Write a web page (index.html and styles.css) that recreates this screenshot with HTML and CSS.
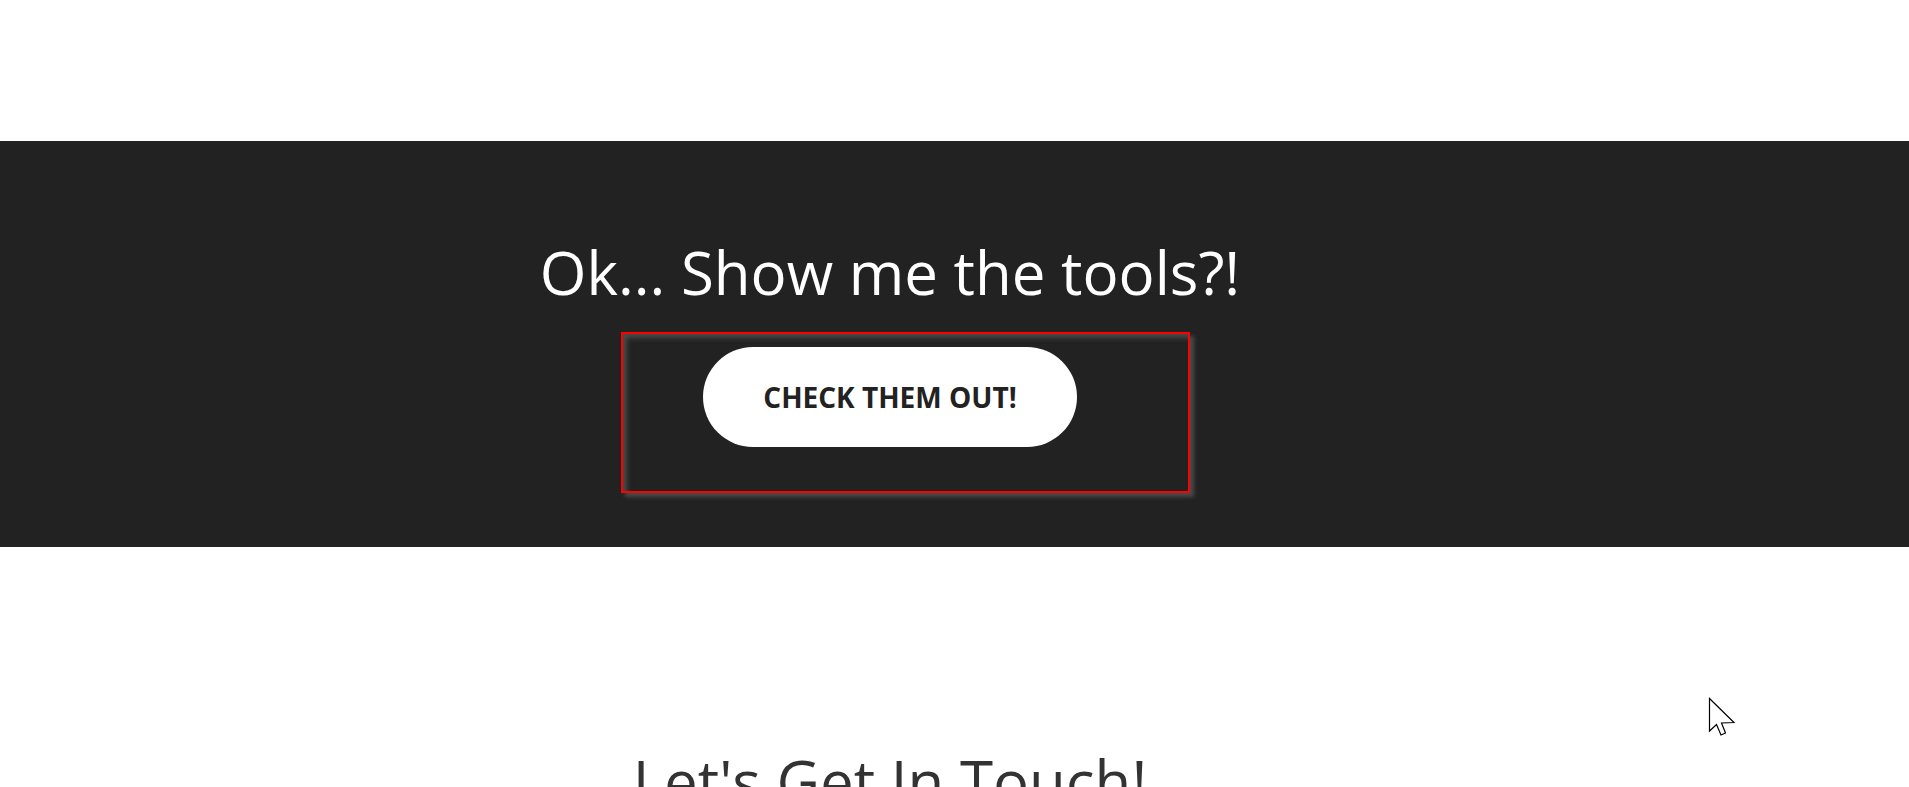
FILE: index.html
```html
<!DOCTYPE html>
<html lang="en">
<head>
<meta charset="utf-8">
<title>Tools</title>
<link rel="stylesheet" href="styles.css">
</head>
<body>
<div class="top-space"></div>
<section class="cta">
  <h2 class="cta-title">Ok... Show me the tools?!</h2>
  <div class="frame">
    <a class="btn" href="#">CHECK THEM OUT!</a>
  </div>
</section>
<section class="contact">
  <h2 class="contact-title">Let's Get In Touch!</h2>
</section>
<svg class="cursor" width="28" height="40" viewBox="0 0 28 40">
  <path d="M1.5 1.5 L1.5 34 L8.5 27.5 L13 38 L17.5 36 L13.5 26 L26 25.5 Z" fill="#fff" stroke="#000" stroke-width="1.2" stroke-linejoin="miter"/>
</svg>
</body>
</html>
```
FILE: styles.css
```css
html, body {
  margin: 0;
  padding: 0;
  background: #ffffff;
  font-family: "Open Sans", "Noto Sans", sans-serif;
  overflow: hidden;
}

.top-space {
  height: 141px;
}

.cta {
  background: #222222;
  height: 406px;
  box-sizing: border-box;
  padding: 95px 129px 0 0;
}

.cta-title {
  margin: 0;
  text-align: center;
  color: #ffffff;
  font-weight: 400;
  font-size: 60px;
  line-height: 72px;
}

.frame {
  width: 569px;
  height: 161px;
  box-sizing: border-box;
  margin: 24px 0 0 calc(50% - 269px);
  border: 2px solid #ff0000;
  padding: 13px 0 0 80px;
  box-shadow: 4px 4px 4px #4a4a4a, inset 4px 4px 5px #4a4a4a;
}

.btn {
  display: flex;
  align-items: center;
  justify-content: center;
  width: 374px;
  height: 100px;
  border-radius: 50px;
  background: #ffffff;
  color: #222222;
  font-weight: 700;
  font-size: 28px;
  text-decoration: none;
}

.contact {
  padding: 0 129px 0 0;
}

.contact-title {
  margin: 0;
  padding-top: 198px;
  text-align: center;
  color: #333333;
  font-weight: 400;
  font-size: 60px;
  line-height: 72px;
}

.cursor {
  position: absolute;
  left: 1708px;
  top: 697px;
}
```
